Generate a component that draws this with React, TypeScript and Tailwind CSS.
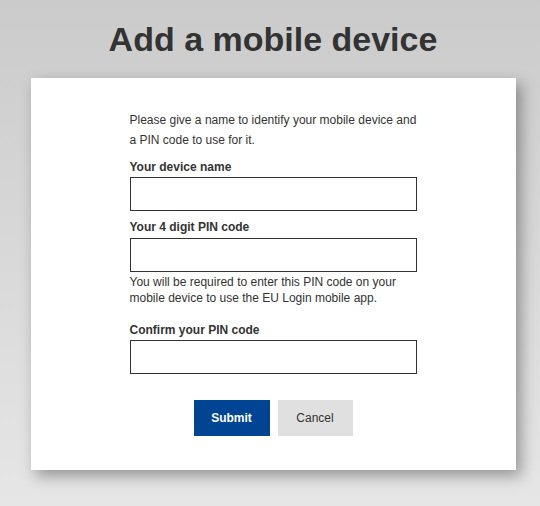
import React from "react";

export default function App() {
  return (
    <div className="min-h-[506px] w-full bg-gradient-to-b from-[#cbcbcb] to-[#e6e6e6] pl-[6px] font-['Liberation_Sans',Arial,sans-serif] text-[#333]">
      <h1 className="pt-[19px] text-center text-[34px] font-bold leading-[40px] text-[#333]">
        Add a mobile device
      </h1>
      <div className="flex justify-center pt-[19px]">
        <form className="w-[485px] bg-white pt-[32px] pb-[34px] shadow-[5px_6px_14px_rgba(0,0,0,0.35)]">
          <div className="mx-auto w-[287px]">
            <p className="text-[12px] leading-[20px]">
              Please give a name to identify your mobile device and a PIN code to use for it.
            </p>
            <label className="mt-[9px] block text-[12px] font-bold leading-[16px]" htmlFor="name">
              Your device name
            </label>
            <input
              id="name"
              type="text"
              className="mt-[2px] block h-[34px] w-[287px] border border-[#333] bg-white"
            />
            <label className="mt-[8px] block text-[12px] font-bold leading-[16px]" htmlFor="pin">
              Your 4 digit PIN code
            </label>
            <input
              id="pin"
              type="password"
              className="mt-[3px] block h-[34px] w-[287px] border border-[#333] bg-white"
            />
            <p className="mt-[2px] text-[12px] leading-[16px]">
              You will be required to enter this PIN code on your mobile device to use the EU Login mobile app.
            </p>
            <label className="mt-[16px] block text-[12px] font-bold leading-[16px]" htmlFor="confirm">
              Confirm your PIN code
            </label>
            <input
              id="confirm"
              type="password"
              className="mt-[2px] block h-[34px] w-[287px] border border-[#333] bg-white"
            />
          </div>
          <div className="mt-[26px] flex justify-center gap-[8px]">
            <button type="button" className="h-[36px] w-[76px] bg-[#004494] text-[12px] font-bold text-white">
              Submit
            </button>
            <button type="button" className="h-[36px] w-[75px] bg-[#e0e0e0] text-[12px] text-[#333]">
              Cancel
            </button>
          </div>
        </form>
      </div>
    </div>
  );
}
